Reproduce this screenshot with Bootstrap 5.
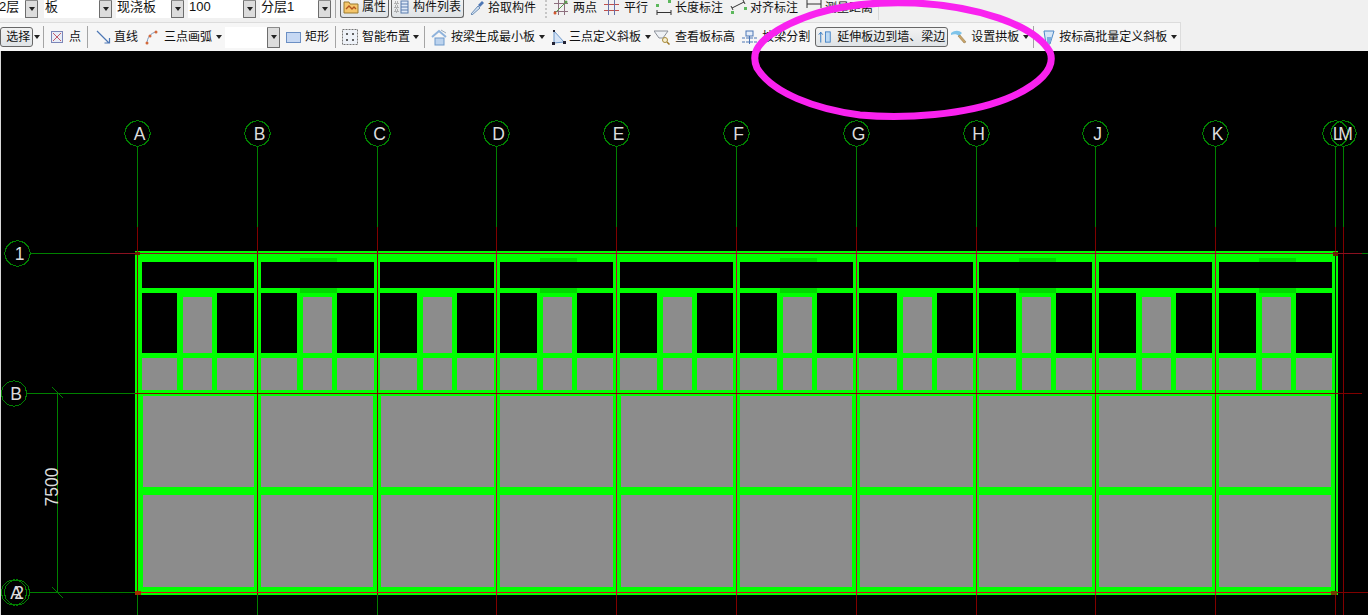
<!DOCTYPE html>
<html lang="zh">
<head>
<meta charset="utf-8">
<title>板绘制</title>
<link href="https://cdn.jsdelivr.net/npm/bootstrap@5.3.0/dist/css/bootstrap.min.css" rel="stylesheet">
<style>
html,body{height:615px;overflow:hidden;background:#000}
body{font:12px/1 "Liberation Sans","Noto Sans CJK SC",sans-serif;color:#111;position:relative}
.tool-top{height:22px;width:100%;background:#f0f0f0;overflow:hidden;align-items:flex-start}
.tool-top-in{height:20px;width:879px;border-right:1px solid #d8d8d8;background:#f1f1f1;align-items:flex-start;flex:none}
.tool-sec{height:29px;background:#f0f0f0}
.tool-sec-in{height:29px;width:1181px;flex:none;background:#f6f6f6;border:solid #dcdcdc;border-width:1px 1px 0 0;align-items:center}
.combo{height:18px;flex:none;align-items:stretch;background:#fff}
.combo-txt{flex:1;padding:0 0 0 1px;line-height:14px;font-size:13px;white-space:nowrap;overflow:hidden}
.combo-arrow{width:13px;flex:none;background:#dcdcdc;border:1px solid #6d6d6d;border-top-color:#8b8b8b;display:flex;align-items:center;justify-content:center;border-radius:1px}
.combo-arrow::after,.drop::after{content:"";border:solid transparent;border-width:4px 3.5px 0;border-top-color:#222}
.drop{display:inline-block;width:7px;height:4px;margin:0 0 0 4px;flex:none;position:relative}
.drop::after{position:absolute;left:0;top:0}
.sepv{width:1px;height:22px;background:#a4a4a4;flex:none}
.tool-top .sepv{height:18px}
.sepd{width:2px;height:18px;flex:none;border-left:2px dotted #c6c6c6}
.tbi{display:inline-flex;align-items:center;flex:none;white-space:nowrap;height:20px;font-size:12px;line-height:1;color:#111}
.tool-top .tbi{height:15px}
.tbi svg{flex:none;display:block}
.tbx{height:20px;padding:0 2px;border:1px solid #666;border-radius:3px;background:linear-gradient(#f2f2f2,#dfe3e6);font-size:12px;line-height:1;color:#111;display:inline-flex;align-items:center;flex:none;white-space:nowrap;--bs-btn-padding-x:2px;--bs-btn-padding-y:0}
.tbx:hover{background:#e6e6e6;border-color:#666;color:#111}
.top-bt{height:18px;margin-top:0;border-top-width:0;border-radius:0 0 3px 3px;padding-bottom:3px}
.cad-stage{height:564px;background:#000;border-left:1px solid #d8d8d8}
.cad-stage svg{display:block}
.cad-label{font:17.5px "Liberation Sans",sans-serif;fill:#dcdcdc;text-anchor:middle}
.mark-over{position:absolute;left:0;top:0;pointer-events:none}
.m1{margin-left:1px}.m2{margin-left:2px}.m3{margin-left:3px}.m4{margin-left:4px}.m5{margin-left:5px}.m6{margin-left:6px}.m7{margin-left:7px}.m8{margin-left:8px}.m9{margin-left:9px}
.w-a{width:40px;margin-left:-2px}.w-b{width:68px}.w-c{width:71px}
.w-sel{width:33px}.w-act{width:133px}.w-blank{width:55px;height:21px}
</style>
</head>
<body>
<div class="tool-top d-flex">
 <div class="tool-top-in d-flex">
  <div class="combo d-flex w-a"><span class="combo-txt">2层</span><span class="combo-arrow"></span></div>
  <div class="combo d-flex w-b m6"><span class="combo-txt">板</span><span class="combo-arrow"></span></div>
  <div class="combo d-flex w-b m4"><span class="combo-txt">现浇板</span><span class="combo-arrow"></span></div>
  <div class="combo d-flex w-b m4"><span class="combo-txt">100</span><span class="combo-arrow"></span></div>
  <div class="combo d-flex w-c m4"><span class="combo-txt">分层1</span><span class="combo-arrow"></span></div>
  <span class="sepv m4"></span>
  <button class="btn tbx top-bt m4" type="button"><svg width="16" height="14" viewBox="0 0 16 14"><path d="M1 2h5l1 2h8v9H1z" fill="#f5c66b" stroke="#9a7a30"/><path d="M3 9l3-3 3 3 2-2 2 2" fill="none" stroke="#b3541e" stroke-width="1.3"/></svg><span class="m3">属性</span></button>
  <button class="btn tbx top-bt m2" type="button"><svg width="15" height="14" viewBox="0 0 15 14"><path d="M1 2h3v2H1zM1 6h3v2H1zM1 10h3v2H1z" fill="none" stroke="#777" stroke-dasharray="1 1"/><rect x="7" y="1" width="7" height="12" fill="#dfe9f7" stroke="#5a7cae"/><path d="M7 4h7M7 7h7M7 10h7" stroke="#5a7cae"/></svg><span class="m4">构件列表</span></button>
  <span class="tbi m6"><svg width="15" height="15" viewBox="0 0 15 15"><path d="M1 14l7-8 2 2-8 7z" fill="#cfe0f2" stroke="#6f8fb6"/><path d="M8 5l4-4 2 2-4 4z" fill="#4d77b5"/></svg><span class="m3">拾取构件</span></span>
  <span class="sepd m9"></span>
  <span class="tbi m6"><svg width="16" height="15" viewBox="0 0 16 15"><path d="M1 3.500h14M1 11.500h14M5.500 0v15M11.500 0v15" stroke="#8d6f7e"/><path d="M2 13L13 2" stroke="#5aa050"/><circle cx="13" cy="2" r="1.500" fill="#5aa050"/><circle cx="2" cy="13" r="1.500" fill="#d2562b"/></svg><span class="m4">两点</span></span>
  <span class="tbi m7"><svg width="15" height="15" viewBox="0 0 15 15"><path d="M0 4.500h15M0 10.500h15" stroke="#c0504d"/><path d="M4.500 0v15M10.500 0v15" stroke="#6671a8"/></svg><span class="m5">平行</span></span>
  <span class="tbi m8"><svg width="16" height="15" viewBox="0 0 16 15"><path d="M1 10v5M15 10v5M1 12.500h14" stroke="#333"/><rect x="0" y="4" width="3" height="3" fill="#5cb85c"/><rect x="12" y="0" width="3" height="3" fill="#5cb85c"/></svg><span class="m3">长度标注</span></span>
  <span class="tbi m7"><svg width="17" height="15" viewBox="0 0 17 15"><path d="M2 8L14 2M1 6l2 4M13 0l2 4" stroke="#333"/><rect x="1" y="11" width="3" height="3" fill="#5cb85c"/><rect x="14" y="7" width="3" height="3" fill="#5cb85c"/></svg><span class="m3">对齐标注</span></span>
  <span class="tbi m8"><svg width="16" height="15" viewBox="0 0 16 15"><path d="M1 0v8M15 0v8M1 4h14" stroke="#333"/></svg><span class="m3">测量距离</span></span>
 </div>
</div>
<div class="tool-sec d-flex">
 <div class="tool-sec-in d-flex">
  <button class="btn tbx w-sel" type="button">&nbsp;选择</button><span class="drop m1"></span>
  <span class="sepv m2"></span>
  <span class="tbi m7"><svg width="12" height="12" viewBox="0 0 12 12"><rect x=".5" y=".5" width="11" height="11" fill="#e8edf7" stroke="#7b86b8"/><path d="M2 2l8 8M10 2l-8 8" stroke="#c25b6b"/></svg><span class="m6">点</span></span>
  <span class="sepv m6"></span>
  <span class="tbi m8"><svg width="15" height="15" viewBox="0 0 15 15"><path d="M1 1l12 12M8.500 13h5v-5" fill="none" stroke="#4d77b5" stroke-width="1.200"/></svg><span class="m3">直线</span></span>
  <span class="tbi m7"><svg width="13" height="15" viewBox="0 0 13 15"><path d="M2 14C2 7 6 3 11 2" fill="none" stroke="#7d98bc"/><circle cx="2" cy="13" r="1.500" fill="#d2693c"/><circle cx="5" cy="6" r="1.500" fill="#d2693c"/><circle cx="11" cy="2" r="1.500" fill="#d2693c"/></svg><span class="m6">三点画弧</span><span class="drop"></span></span>
  <div class="combo d-flex m2 w-blank"><span class="combo-txt"></span><span class="combo-arrow"></span></div>
  <span class="tbi m6"><svg width="15" height="11" viewBox="0 0 15 11"><rect x=".5" y=".5" width="14" height="10" fill="#c6d8f3" stroke="#6b8fc4"/></svg><span class="m4">矩形</span></span>
  <span class="sepv m6"></span>
  <span class="tbi m6"><svg width="16" height="16" viewBox="0 0 16 16"><rect x=".5" y=".5" width="15" height="15" fill="#eef2f8" stroke="#777" stroke-dasharray="2 1"/><path d="M5 4v2M4 5h2M11 4v2M10 5h2M5 10v2M4 11h2M11 10v2M10 11h2" stroke="#333"/></svg><span class="m4">智能布置</span><span class="drop m3"></span></span>
  <span class="sepv m4"></span>
  <span class="tbi m6"><svg width="16" height="17" viewBox="0 0 16 17"><path d="M1 8l7-6 7 6" fill="none" stroke="#8fb3dc" stroke-width="2"/><rect x="4" y="9" width="9" height="7" fill="#bcd3ee" stroke="#6f9acb"/><path d="M10 1l5 3" stroke="#9ab"/></svg><span class="m4">按梁生成最小板</span><span class="drop"></span></span>
  <span class="tbi m6"><svg width="14" height="15" viewBox="0 0 14 15"><path d="M2 1v12l10-1z" fill="#d6e4f6" stroke="#6f9acb"/><rect x="0" y="12" width="3" height="3" fill="#223"/><rect x="11" y="11" width="3" height="3" fill="#223"/><rect x="1" y="0" width="2" height="2" fill="#223"/></svg><span class="m3">三点定义斜板</span><span class="drop"></span></span>
  <span class="tbi m2"><svg width="16" height="16" viewBox="0 0 16 16"><path d="M0 2h14L9 9H5z" fill="#eef1f5" stroke="#8a8f98"/><circle cx="11" cy="11" r="2.500" fill="#f7efd0" stroke="#a88b3b"/><path d="M13 13l2.500 2.500" stroke="#a07b27" stroke-width="1.500"/></svg><span class="m5">查看板标高</span></span>
  <span class="tbi m7"><svg width="15" height="16" viewBox="0 0 15 16"><rect x="4" y="2" width="7" height="5" fill="#e6eef9" stroke="#4d77b5"/><path d="M0 9h15M0 13h15" stroke="#4d77b5" stroke-dasharray="3 1"/><path d="M7.500 7v8" stroke="#4d77b5"/></svg><span class="m5">按梁分割</span></span>
  <button class="btn tbx w-act m5" type="button"><svg width="19" height="16" viewBox="0 0 19 16"><path d="M3.500 15V2M1 5l2.500-3L6 5" fill="none" stroke="#2f75c0" stroke-width="1.200"/><rect x="9.500" y="1.500" width="6" height="13" fill="#bcd9f3" stroke="#2f75c0"/></svg><span class="m4">延伸板边到墙、梁边</span></button>
  <span class="tbi m3"><svg width="16" height="14" viewBox="0 0 16 14"><path d="M0 3c4-3 8-3 11 0L8 6C6 4 3 4 0 5z" fill="#7fc4ea"/><path d="M9 5l6 7-2 1-6-7z" fill="#c9a56a" stroke="#8a6d3b" stroke-width=".5"/></svg><span class="m4">设置拱板</span><span class="drop"></span></span>
  <span class="sepv m3"></span>
  <span class="tbi m7"><svg width="14" height="15" viewBox="0 0 14 15"><path d="M3 1h10L9 14H5z" fill="#d6e7f7" stroke="#4d87c5"/><path d="M6 7h5l-2 6H6z" fill="#7eb0e0"/></svg><span class="m4">按标高批量定义斜板</span><span class="drop"></span></span>
 </div>
</div>
<div class="cad-stage"><svg id="cad" width="1367" height="564" viewBox="1 51 1367 564"></svg></div>
<svg class="mark-over" width="1368" height="615" viewBox="0 0 1368 615"><path d="M778 30C815 8 865 1 915 3C975 6 1034 24 1050 52C1056 68 1040 85 1006 99C965 115 905 119 860 115C815 109 772 93 757 68C750 52 760 41 778 30Z" fill="none" stroke="#f922ef" stroke-width="7"/></svg>
<script>
const G=[137,257,377,496.5,616.5,736.5,856.5,976,1095.5,1215.5];
const L=[142,261,380,500,620,740,859,979,1099,1219],R=[254,374,494,613,733,853,973,1092,1212,1332];
const LL=[143,261,381,500,621,740,860,979,1099,1219],LR=[254,373,494,613,733,852,973,1092,1212,1331];
const names=['A','B','C','D','E','F','G','H','J','K'];
let s='';
const rect=(x,y,w,h,c)=>`<rect x="${x}" y="${y}" width="${w}" height="${h}" fill="${c}" shape-rendering="crispEdges"/>`;
const line=(a,b,c,d,col)=>`<line x1="${a}" y1="${b}" x2="${c}" y2="${d}" stroke="${col}" stroke-width="1" shape-rendering="crispEdges"/>`;
const hexa=(x,y)=>{let p=[];for(let i=0;i<12;i++){const t=i*Math.PI/6+Math.PI/2;p.push((x+12.8*Math.cos(t)).toFixed(1)+','+(y-12.8*Math.sin(t)).toFixed(1));}return `<polygon points="${p.join(' ')}" fill="none" stroke="#008000" shape-rendering="crispEdges"/>`;};
const label=(x,y,t)=>hexa(x,y)+`<text class="cad-label" x="${x+2}" y="${y+6}">${t}</text>`;
const GREY='#8c8c8c',GRN='#00ff00',DK='#00d800',LG='#008000',DR='#800000',CR='#c00030';
s+=rect(135,251,1203,344,GRN);
G.forEach((g,i)=>{
 const a=L[i],b=R[i],m1=Math.round(g+46),m2=Math.round(g+75);
 s+=rect(a,262,b-a,26,'#000');
 s+=rect(a,293,m1-6-a,60,'#000');
 s+=rect(m2+5,293,b-m2-5,60,'#000');
 s+=rect(m1,297,m2-m1,56,GREY);
 s+=rect(a,358,m1-6-a,32,GREY);
 s+=rect(m1,358,m2-m1,32,GREY);
 s+=rect(m2+5,358,b-m2-5,32,GREY);
 s+=rect(LL[i],396,LR[i]-LL[i],91,GREY);
 s+=rect(LL[i],495,LR[i]-LL[i],92,GREY);
 if(i%2){s+=rect(m1-3,258,37,4,DK);s+=rect(m1-3,288,37,5,DK);}
});
const X=[...G,1335.5,1343.5];
X.forEach((x,i)=>{
 const px=Math.floor(x)+.5;
 s+=line(px,147,px,227,LG)+line(px,227,px,251,DR)+line(px,251,px,595,i<3?DR:CR)+line(px,595,px,615,i<3?LG:DR);
});
s+=rect(1335,252,1,343,'#101010')+line(1343.5,227,1343.5,615,DR);
s+=line(30,253.5,110,253.5,LG)+line(110,253.5,1362,253.5,'#8a1020')+line(1362,253.5,1368,253.5,LG);
s+=line(26,393.5,135,393.5,LG)+line(135,393.5,1362,393.5,DR);
s+=line(30,592.5,135,592.5,LG)+line(135,592.5,1336,592.5,'#e8001e')+line(1336,592.5,1368,592.5,DR);
s+=rect(135,591,6,4,'#a03000')+rect(1331,591,6,4,'#704000')+rect(135,252,5,3,'#6a2000')+rect(1333,252,5,4,'#6a2000');
s+=line(57.5,393,57.5,592,LG)+`<line x1="52" y1="387" x2="63" y2="398" stroke="${LG}"/><line x1="52" y1="587" x2="63" y2="598" stroke="${LG}"/>`;
s+=`<text class="cad-label" transform="translate(58 487) rotate(-90)">7500</text>`;
G.forEach((g,i)=>{s+=label(Math.floor(g)+.5,133.5,names[i]);});
s+=label(1335.5,133.5,'L')+label(1343.5,133.5,'M');
s+=label(17.5,253.5,'1')+label(14,393.5,'B')+label(14,592.5,'A')+label(17,592.5,'2');
document.getElementById('cad').innerHTML=s;
</script>
<script src="https://cdn.jsdelivr.net/npm/bootstrap@5.3.0/dist/js/bootstrap.bundle.min.js"></script>
</body>
</html>
